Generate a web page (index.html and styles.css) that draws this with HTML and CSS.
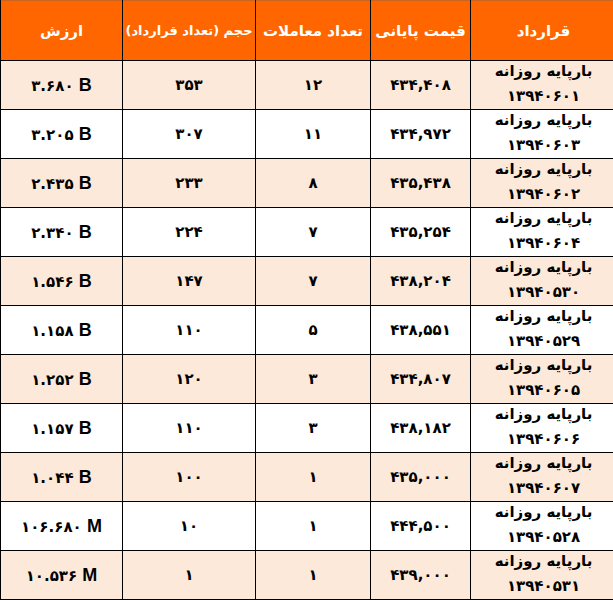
FILE: index.html
```html
<!DOCTYPE html>
<html lang="fa">
<head>
<meta charset="utf-8">
<link rel="stylesheet" href="styles.css">
</head>
<body>
<div class="frame">
<table class="grid" dir="rtl">
<colgroup>
<col class="c-contract"><col class="c-price"><col class="c-count"><col class="c-vol"><col class="c-value">
</colgroup>
<thead>
<tr class="head">
<th>قرارداد</th><th>قیمت پایانی</th><th>تعداد معاملات</th><th class="narrow">حجم (تعداد قرارداد)</th><th>ارزش</th>
</tr>
</thead>
<tbody>
<tr class="odd"><td class="contract"><div>بارپایه روزانه</div><div>۱۳۹۴۰۶۰۱</div></td><td>۴۳۴,۴۰۸</td><td>۱۲</td><td>۳۵۳</td><td class="value"><span class="num">۳.۶۸۰</span> <span class="unit">B</span></td></tr>
<tr><td class="contract"><div>بارپایه روزانه</div><div>۱۳۹۴۰۶۰۳</div></td><td>۴۳۴,۹۷۲</td><td>۱۱</td><td>۳۰۷</td><td class="value"><span class="num">۳.۲۰۵</span> <span class="unit">B</span></td></tr>
<tr class="odd"><td class="contract"><div>بارپایه روزانه</div><div>۱۳۹۴۰۶۰۲</div></td><td>۴۳۵,۴۳۸</td><td>۸</td><td>۲۳۳</td><td class="value"><span class="num">۲.۴۳۵</span> <span class="unit">B</span></td></tr>
<tr><td class="contract"><div>بارپایه روزانه</div><div>۱۳۹۴۰۶۰۴</div></td><td>۴۳۵,۲۵۴</td><td>۷</td><td>۲۲۴</td><td class="value"><span class="num">۲.۳۴۰</span> <span class="unit">B</span></td></tr>
<tr class="odd"><td class="contract"><div>بارپایه روزانه</div><div>۱۳۹۴۰۵۳۰</div></td><td>۴۳۸,۲۰۴</td><td>۷</td><td>۱۴۷</td><td class="value"><span class="num">۱.۵۴۶</span> <span class="unit">B</span></td></tr>
<tr><td class="contract"><div>بارپایه روزانه</div><div>۱۳۹۴۰۵۲۹</div></td><td>۴۳۸,۵۵۱</td><td>۵</td><td>۱۱۰</td><td class="value"><span class="num">۱.۱۵۸</span> <span class="unit">B</span></td></tr>
<tr class="odd"><td class="contract"><div>بارپایه روزانه</div><div>۱۳۹۴۰۶۰۵</div></td><td>۴۳۴,۸۰۷</td><td>۳</td><td>۱۲۰</td><td class="value"><span class="num">۱.۲۵۲</span> <span class="unit">B</span></td></tr>
<tr><td class="contract"><div>بارپایه روزانه</div><div>۱۳۹۴۰۶۰۶</div></td><td>۴۳۸,۱۸۲</td><td>۳</td><td>۱۱۰</td><td class="value"><span class="num">۱.۱۵۷</span> <span class="unit">B</span></td></tr>
<tr class="odd"><td class="contract"><div>بارپایه روزانه</div><div>۱۳۹۴۰۶۰۷</div></td><td>۴۳۵,۰۰۰</td><td>۱</td><td>۱۰۰</td><td class="value"><span class="num">۱.۰۴۴</span> <span class="unit">B</span></td></tr>
<tr><td class="contract"><div>بارپایه روزانه</div><div>۱۳۹۴۰۵۲۸</div></td><td>۴۴۴,۵۰۰</td><td>۱</td><td>۱۰</td><td class="value"><span class="num">۱۰۶.۶۸۰</span> <span class="unit">M</span></td></tr>
<tr class="odd"><td class="contract"><div>بارپایه روزانه</div><div>۱۳۹۴۰۵۳۱</div></td><td>۴۳۹,۰۰۰</td><td>۱</td><td>۱</td><td class="value"><span class="num">۱۰.۵۳۶</span> <span class="unit">M</span></td></tr>
</tbody>
</table>
</div>
</body>
</html>
```

FILE: styles.css
```css
html, body {
  margin: 0;
  padding: 0;
  background: #fff;
}
.frame {
  width: 613px;
  height: 600px;
  overflow: hidden;
}
.grid {
  border-collapse: collapse;
  table-layout: fixed;
  width: 616px;
  font-family: "DejaVu Sans", sans-serif;
  font-weight: bold;
  font-size: 15px;
  color: #000;
}
.c-contract { width: 146px; }
.c-price { width: 100px; }
.c-count { width: 115px; }
.c-vol { width: 133px; }
.c-value { width: 122px; }
.grid th, .grid td {
  border: 1px solid #000;
  text-align: center;
  vertical-align: middle;
  padding: 0;
  overflow: hidden;
  white-space: nowrap;
}
.head th {
  height: 59px;
  background: #ff6600;
  color: #fff;
  font-size: 15px;
  border-top: 1px solid #c9651f;
}
.head th.narrow {
  font-size: 13px;
}
.grid tbody tr { height: 49px; }
.grid tbody tr.odd { background: #fde9d9; }
.grid td.contract {
  font-size: 15px;
  line-height: 25px;
  vertical-align: top;
}
.contract div:first-child { margin-top: -2px; }
.value { direction: ltr; }
.unit {
  font-family: "Liberation Sans", sans-serif;
  font-size: 18px;
  font-weight: bold;
}
```
